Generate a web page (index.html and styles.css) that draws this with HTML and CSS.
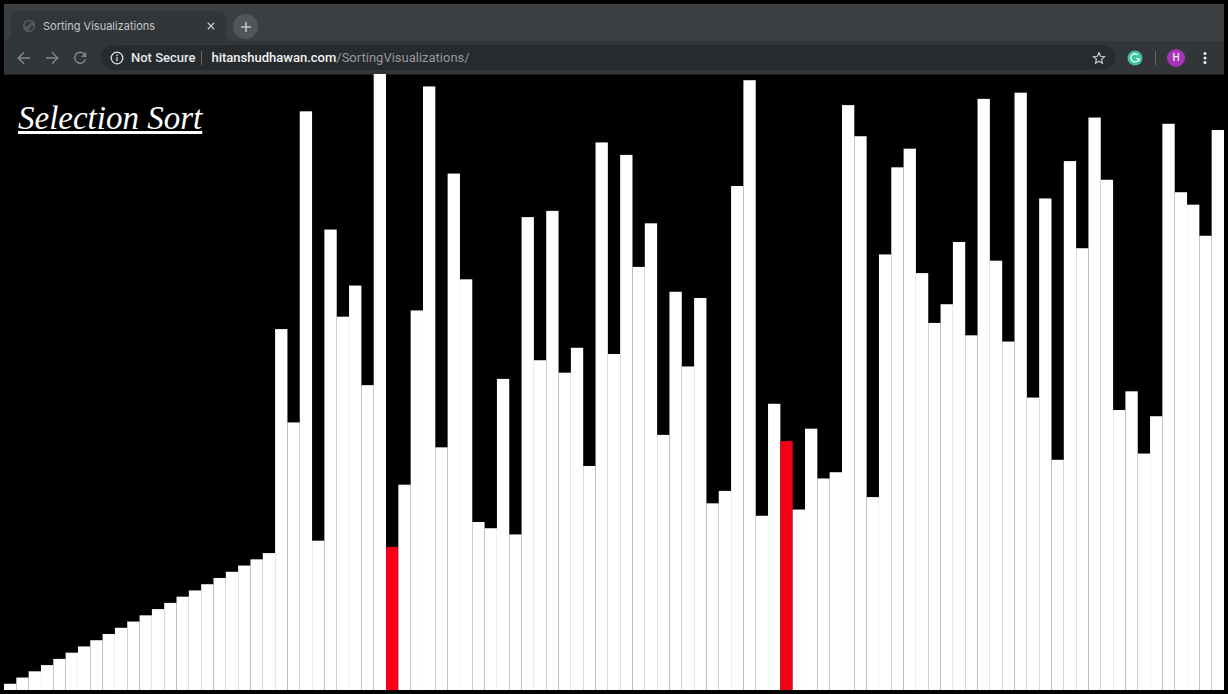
FILE: index.html
```
<!DOCTYPE html>
<html lang="en">
<head>
<meta charset="utf-8">
<title>Sorting Visualizations</title>
<link rel="stylesheet" href="styles.css">
</head>
<body>
<div class="browser">
  <header class="chrome">
    <div class="tab-strip">
      <div class="tab">
        <svg class="favicon" viewBox="0 0 14 14" aria-hidden="true"><circle cx="7" cy="7" r="6.2" fill="#56595c"/><path d="M2.500 5 5 2.500 8 2 9.500 3.500 8 5 6 5.500 7 7H4.500L3.500 8.500zM8 7.500 10.500 6.500 12 8 10.500 10.500 7 12 6 10.500 8 9.500z" fill="#35383b"/></svg>
        <span class="tab-title">Sorting Visualizations</span>
        <button class="tab-close" aria-label="Close tab"><svg viewBox="0 0 10 10"><path d="M1.8 1.8l6.4 6.4M8.2 1.8L1.8 8.2"/></svg></button>
      </div>
      <button class="new-tab" aria-label="New tab"><svg viewBox="0 0 12 12"><path d="M6 1v10M1 6h10"/></svg></button>
    </div>
    <nav class="toolbar">
      <button class="nav-button" aria-label="Back"><svg viewBox="0 0 14 14"><path d="M13 7H1.5M7 1.3L1.3 7L7 12.7"/></svg></button>
      <button class="nav-button" aria-label="Forward"><svg viewBox="0 0 14 14"><path d="M1 7h11.5M7 1.3L12.7 7L7 12.7"/></svg></button>
      <button class="nav-button" aria-label="Reload"><svg viewBox="0 0 14 14"><path d="M11.7 3.6A5.5 5.5 0 1 0 12.4 8.4"/><path class="solid" d="M13.2 .7v5.2H8z"/></svg></button>
      <div class="address">
        <svg class="info" viewBox="0 0 14 14" aria-hidden="true"><circle cx="7" cy="7" r="5.8"/><path d="M7 6.3v4M7 3.6v1.6"/></svg>
        <span class="security">Not Secure</span>
        <span class="divider"></span>
        <span class="url"><span class="host">hitanshudhawan.com</span>/SortingVisualizations/</span>
        <button class="star" aria-label="Bookmark this page"><svg viewBox="0 0 14 14"><path d="M7 1.6l1.6 3.7 4 .4-3 2.6.9 4L7 10.200l-3.500 2.100.9-4-3-2.600 4-.4z"/></svg></button>
      </div>
      <button class="extension" aria-label="Grammarly"><svg viewBox="0 0 16 16"><circle cx="8" cy="8" r="7.500" fill="#3fc297"/><path d="M11 5A4.100 4.100 0 1 0 12 8.600H9.300M12 8.600v2.600" fill="none" stroke="#e6f7f1" stroke-width="1.400"/></svg></button>
      <span class="divider"></span>
      <button class="profile" aria-label="Profile">H</button>
      <button class="menu" aria-label="Menu"><svg viewBox="0 0 4 14"><circle cx="2" cy="2.500" r="1.500"/><circle cx="2" cy="7" r="1.500"/><circle cx="2" cy="11.500" r="1.500"/></svg></button>
    </nav>
  </header>
  <main class="stage">
    <svg class="bars" id="bars" viewBox="0 0 99 99" preserveAspectRatio="none" role="img" aria-label="Values being sorted"></svg>
    <h1 class="title">Selection Sort</h1>
  </main>
</div>
<script src="script.js"></script>
</body>
</html>
```
FILE: styles.css
```
* { box-sizing: border-box; }

body {
  margin: 0;
  background: #000;
  font-family: Roboto, "Liberation Sans", sans-serif;
}

.browser {
  display: flex;
  flex-direction: column;
  height: 100vh;
  padding: 4px;
}

button {
  display: flex;
  align-items: center;
  justify-content: center;
  flex: none;
  margin: 0;
  padding: 0;
  border: 0;
  background: none;
  color: inherit;
  font: inherit;
}

svg { display: block; }

.chrome { background: #3c3f42; }

.tab-strip {
  display: flex;
  align-items: flex-end;
  height: 37px;
  padding-left: 7px;
  gap: 7px;
}

.tab {
  position: relative;
  display: flex;
  align-items: center;
  width: 215px;
  height: 30px;
  padding: 0 8px 0 11px;
  border-radius: 8px 8px 0 0;
  background: #323639;
}

.tab::before,
.tab::after {
  content: "";
  position: absolute;
  bottom: 0;
  width: 7px;
  height: 7px;
}
.tab::before { right: 100%; background: radial-gradient(circle at 0 0, #3c3f42 7px, #323639 7px); }
.tab::after { left: 100%; background: radial-gradient(circle at 100% 0, #3c3f42 7px, #323639 7px); }

.favicon { width: 14px; height: 14px; }

.tab-title {
  flex: 1;
  margin-left: 7px;
  color: #c3c6c9;
  font-family: Inter, "Liberation Sans", sans-serif;
  font-size: 11px;
  white-space: nowrap;
}

.tab-close { width: 14px; height: 14px; }
.tab-close svg { width: 10px; height: 10px; stroke: #c3c6c9; stroke-width: 1.3; }

.new-tab {
  width: 25px;
  height: 25px;
  margin-bottom: 2px;
  border-radius: 50%;
  background: #525558;
}
.new-tab svg { width: 12px; height: 12px; stroke: #c3c6c9; stroke-width: 1.5; }

.toolbar {
  display: flex;
  align-items: center;
  height: 34px;
  padding: 0 17px 0 13px;
  background: #323639;
  border-bottom: 1px solid #1d1f21;
}

.nav-button { width: 14px; height: 14px; margin-right: 14px; }
.nav-button svg { width: 14px; height: 14px; fill: none; stroke: #84878a; stroke-width: 1.4; }
.nav-button .solid { fill: #84878a; stroke: none; }

.address {
  display: flex;
  flex: 1;
  align-items: center;
  height: 25px;
  padding: 0 9px;
  border-radius: 13px;
  background: #282b2e;
  color: #94979a;
  font-size: 13px;
}

.info { width: 14px; height: 14px; fill: none; stroke: #dfe1e3; stroke-width: 1.3; }
.security { margin: 0 6px 0 7px; color: #e4e6e8; font-weight: 500; }
.divider { width: 1px; height: 14px; background: #64676a; }
.url { flex: 1; margin-left: 9px; white-space: nowrap; }
.host { color: #f0f1f2; font-weight: 500; }

.star svg { width: 14px; height: 14px; fill: none; stroke: #c3c6c9; stroke-width: 1.2; }
.extension { margin: 0 12px; }
.extension svg { width: 16px; height: 16px; }

.profile {
  width: 18px;
  height: 18px;
  margin: 0 18px 0 11px;
  border-radius: 50%;
  background: #a435b8;
  color: #f3e3f5;
  font-size: 10px;
  font-weight: 500;
}

.menu svg { width: 4px; height: 14px; fill: #f0f1f2; }

.stage {
  display: grid;
  flex: 1;
  min-height: 0;
  margin-top: -1px;
  overflow: hidden;
}

.bars,
.title { grid-area: 1 / 1; }

.bars { width: 100%; height: 100%; min-height: 0; fill: #fff; }
.bars .active { fill: #f30018; }

.title {
  place-self: start;
  margin: 24px 14px;
  color: #fff;
  font: italic 400 33px/40px "Apple Chancery", "Liberation Serif", serif;
  text-decoration: underline;
  text-decoration-thickness: 3px;
  text-decoration-skip-ink: none;
  white-space: nowrap;
}
```
FILE: script.js
```
const values = [
  1, 2, 3, 4, 5, 6, 7, 8, 9, 10, 11, 12, 13, 14, 15, 16, 17, 18, 19, 20, 21, 22,
  58, 43, 93, 24, 74, 60, 65, 49, 99, 23, 33, 61, 97, 39, 83, 66, 27, 26, 50, 25,
  76, 53, 77, 51, 55, 36, 88, 54, 86, 68, 75, 41, 64, 52, 63, 30, 32, 81, 98, 28,
  46, 40, 29, 42, 34, 35, 94, 89, 31, 70, 84, 87, 67, 59, 62, 72, 57, 95, 69, 56,
  96, 47, 79, 37, 85, 71, 92, 82, 45, 48, 38, 44, 91, 80, 78, 73, 90
];
const active = [31, 63];
const chart = document.getElementById("bars");

values.forEach((value, index) => {
  const bar = document.createElementNS("http://www.w3.org/2000/svg", "rect");
  bar.setAttribute("x", index);
  bar.setAttribute("y", values.length - value);
  bar.setAttribute("width", 1);
  bar.setAttribute("height", value);
  if (active.includes(index)) bar.setAttribute("class", "active");
  chart.appendChild(bar);
});
```
